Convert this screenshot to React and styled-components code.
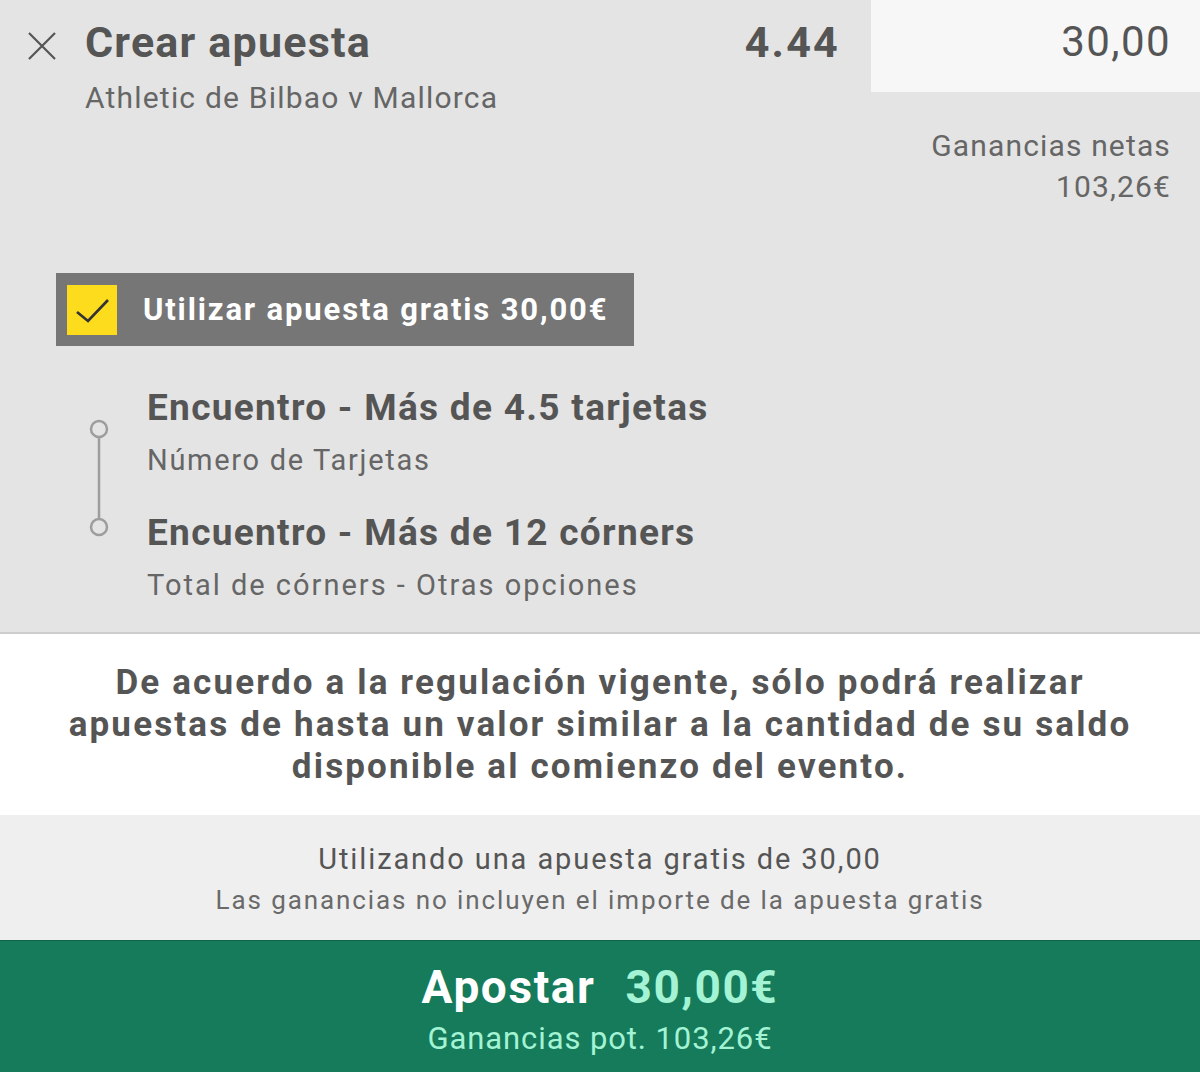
import styled, { createGlobalStyle } from "styled-components"

const Global = createGlobalStyle`
  body {
    margin: 0;
    font-family: Roboto, "Liberation Sans", sans-serif;
    background: #e4e4e4;
  }
`

const Page = styled.div`
  width: 1200px;
  height: 1072px;
  display: flex;
  flex-direction: column;
  overflow: hidden;
`

const Top = styled.section`
  background: #e4e4e4;
  height: 632px;
  border-bottom: 2px solid #cdcdcd;
  display: flex;
  flex-direction: column;
`

const Header = styled.div`
  display: flex;
  align-items: flex-start;
`

const Close = styled.button`
  border: 0;
  background: none;
  padding: 0;
  margin: 32px 0 0 28px;
  width: 28px;
  height: 28px;
  display: flex;
`

const TitleBlock = styled.div`
  flex: 1;
  margin-left: 29px;
  padding-top: 18px;
`

const Title = styled.h1`
  margin: 0;
  font-size: 43px;
  line-height: 48px;
  font-weight: 700;
  color: #555;
  letter-spacing: 1.2px;
`

const Sub = styled.div`
  margin-top: 13px;
  font-size: 30px;
  line-height: 38px;
  color: #666;
  letter-spacing: 1.2px;
`

const Odds = styled.div`
  padding-top: 18px;
  margin-right: 31px;
  font-size: 43px;
  line-height: 48px;
  font-weight: 700;
  color: #555;
  letter-spacing: 2.2px;
`

const Stake = styled.div`
  width: 300px;
  padding: 18px 29px 0 0;
  height: 74px;
  background: #f7f7f7;
  text-align: right;
  font-size: 42px;
  line-height: 48px;
  color: #555;
  letter-spacing: 1.4px;
`

const Winnings = styled.div`
  align-self: flex-end;
  margin: 8px 29px 0 0;
  text-align: right;
  font-size: 30px;
  line-height: 41px;
  color: #666;
  letter-spacing: 1.15px;
`

const FreeBet = styled.label`
  margin: 66px 0 0 56px;
  width: 578px;
  height: 73px;
  background: #767676;
  display: flex;
  align-items: center;
  gap: 26px;
  padding-left: 11px;
  box-sizing: border-box;
`

const Box = styled.span`
  width: 50px;
  height: 50px;
  background: #fddc1e;
  display: flex;
`

const FreeText = styled.span`
  font-size: 31px;
  font-weight: 700;
  color: #fff;
  letter-spacing: 1.85px;
`

const Legs = styled.div`
  display: flex;
  margin: 40px 0 0 89px;
`

const Rail = styled.svg`
  flex: none;
`

const LegList = styled.div`
  margin-left: 38px;
  display: flex;
  flex-direction: column;
`

const Leg = styled.div`
  & + & {
    margin-top: 33px;
  }
`

const LegTitle = styled.div`
  font-size: 37px;
  line-height: 44px;
  font-weight: 700;
  color: #555;
  letter-spacing: 1.3px;
`

const LegSub = styled.div`
  margin-top: 12px;
  font-size: 29px;
  line-height: 36px;
  color: #666;
  letter-spacing: ${p => p.$ls}px;
`

const Notice = styled.section`
  background: #fff;
  padding: 28px 0 27px;
  text-align: center;
  font-size: 35px;
  line-height: 42px;
  font-weight: 700;
  color: #555;
  letter-spacing: 2.15px;
  white-space: nowrap;
`

const Info = styled.section`
  background: #efefef;
  height: 125px;
  box-sizing: border-box;
  padding-top: 26px;
  text-align: center;
`

const InfoLine = styled.div`
  font-size: ${p => p.$size}px;
  line-height: ${p => p.$lh}px;
  color: ${p => p.$color};
  margin-top: ${p => p.$mt || 0}px;
  letter-spacing: 1.9px;
`

const Bet = styled.button`
  flex: 1;
  border: 0;
  border-top: 1px solid #0f6548;
  background: #157b5b;
  padding: 20px 0 0;
  display: flex;
  flex-direction: column;
  align-items: center;
  font-family: inherit;
`

const BetMain = styled.div`
  font-size: 46px;
  line-height: 52px;
  font-weight: 700;
  color: #fff;
  display: flex;
  gap: 30px;
  letter-spacing: 1.6px;
`

const Amount = styled.span`
  color: #a3f3d4;
`

const BetSub = styled.div`
  margin-top: 8px;
  font-size: 31px;
  line-height: 36px;
  color: #a3f3d4;
  letter-spacing: 0.9px;
`

const legs = [
  { title: "Encuentro - Más de 4.5 tarjetas", sub: "Número de Tarjetas", ls: 1.7 },
  { title: "Encuentro - Más de 12 córners", sub: "Total de córners - Otras opciones", ls: 2 },
]

export default function App() {
  return (
    <Page>
      <Global />
      <Top>
        <Header>
          <Close aria-label="Cerrar">
            <svg width="28" height="28" viewBox="0 0 28 28">
              <path d="M1 1 L27 27 M27 1 L1 27" stroke="#555" strokeWidth="2.2" fill="none" />
            </svg>
          </Close>
          <TitleBlock>
            <Title>Crear apuesta</Title>
            <Sub>Athletic de Bilbao v Mallorca</Sub>
          </TitleBlock>
          <Odds>4.44</Odds>
          <Stake>30,00</Stake>
        </Header>
        <Winnings>
          Ganancias netas
          <br />
          103,26€
        </Winnings>
        <FreeBet>
          <Box>
            <svg width="50" height="50" viewBox="0 0 50 50">
              <path d="M10 27 L21 36 L41 15" stroke="#333" strokeWidth="2.6" fill="none" />
            </svg>
          </Box>
          <FreeText>Utilizar apuesta gratis 30,00€</FreeText>
        </FreeBet>
        <Legs>
          <Rail width="20" height="160" viewBox="0 0 20 160">
            <line x1="10" y1="52" x2="10" y2="132" stroke="#9d9d9d" strokeWidth="2.5" />
            <circle cx="10" cy="43" r="8" stroke="#9d9d9d" strokeWidth="2.5" fill="none" />
            <circle cx="10" cy="141" r="8" stroke="#9d9d9d" strokeWidth="2.5" fill="none" />
          </Rail>
          <LegList>
            {legs.map(l => (
              <Leg key={l.title}>
                <LegTitle>{l.title}</LegTitle>
                <LegSub $ls={l.ls}>{l.sub}</LegSub>
              </Leg>
            ))}
          </LegList>
        </Legs>
      </Top>
      <Notice>
        De acuerdo a la regulación vigente, sólo podrá realizar
        <br />
        apuestas de hasta un valor similar a la cantidad de su saldo
        <br />
        disponible al comienzo del evento.
      </Notice>
      <Info>
        <InfoLine $size={29} $lh={36} $color="#555">Utilizando una apuesta gratis de 30,00</InfoLine>
        <InfoLine $size={26} $lh={32} $color="#6a6a6a" $mt={7}>
          Las ganancias no incluyen el importe de la apuesta gratis
        </InfoLine>
      </Info>
      <Bet>
        <BetMain>
          <span>Apostar</span>
          <Amount>30,00€</Amount>
        </BetMain>
        <BetSub>Ganancias pot. 103,26€</BetSub>
      </Bet>
    </Page>
  )
}
